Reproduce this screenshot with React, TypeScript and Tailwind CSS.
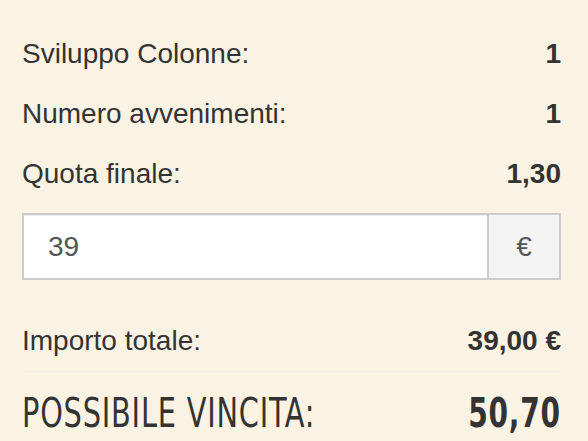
const rows = [
  { label: "Sviluppo Colonne:", value: "1" },
  { label: "Numero avvenimenti:", value: "1" },
  { label: "Quota finale:", value: "1,30" },
];

const App = () => (
  <div
    className="min-h-screen bg-[#faf3e4] pl-[22px] pr-[27px] pt-[24px] text-[#333] text-[28px]"
    style={{ fontFamily: '"Liberation Sans", Arial, sans-serif' }}
  >
    {rows.map((r) => (
      <div key={r.label} className="flex h-[60px] items-center justify-between leading-[60px]">
        <span>{r.label}</span>
        <span className="font-bold">{r.value}</span>
      </div>
    ))}

    <div className="mt-[9px] flex h-[67px] border-2 border-[#ccc]">
      <input
        className="min-w-0 flex-1 bg-white pl-[24px] text-[28px] text-[#555] shadow-[inset_0_1px_1px_rgba(0,0,0,0.075)] outline-none"
        defaultValue="39"
      />
      <div className="flex w-[72px] items-center justify-center border-l-2 border-[#ccc] bg-[#f4f4f4] text-[#555]">
        €
      </div>
    </div>

    <div className="mt-[31px] flex h-[61px] items-center justify-between border-b border-[#eeeeee] leading-[60px]">
      <span>Importo totale:</span>
      <span className="font-bold">39,00 €</span>
    </div>

    <div
      className="flex items-center justify-between pt-[13px] text-[40px] leading-[56px] text-[#333]"
      style={{ fontFamily: '"DejaVu Sans Condensed", "Liberation Sans Narrow", sans-serif', fontStretch: "condensed" }}
    >
      <span className="inline-block origin-left scale-x-[0.8] whitespace-nowrap tracking-[1px]">
        POSSIBILE VINCITA:
      </span>
      <span className="inline-block origin-right scale-x-[0.78] whitespace-nowrap font-bold tracking-[1px]">
        50,70
      </span>
    </div>
  </div>
);

export default App;
